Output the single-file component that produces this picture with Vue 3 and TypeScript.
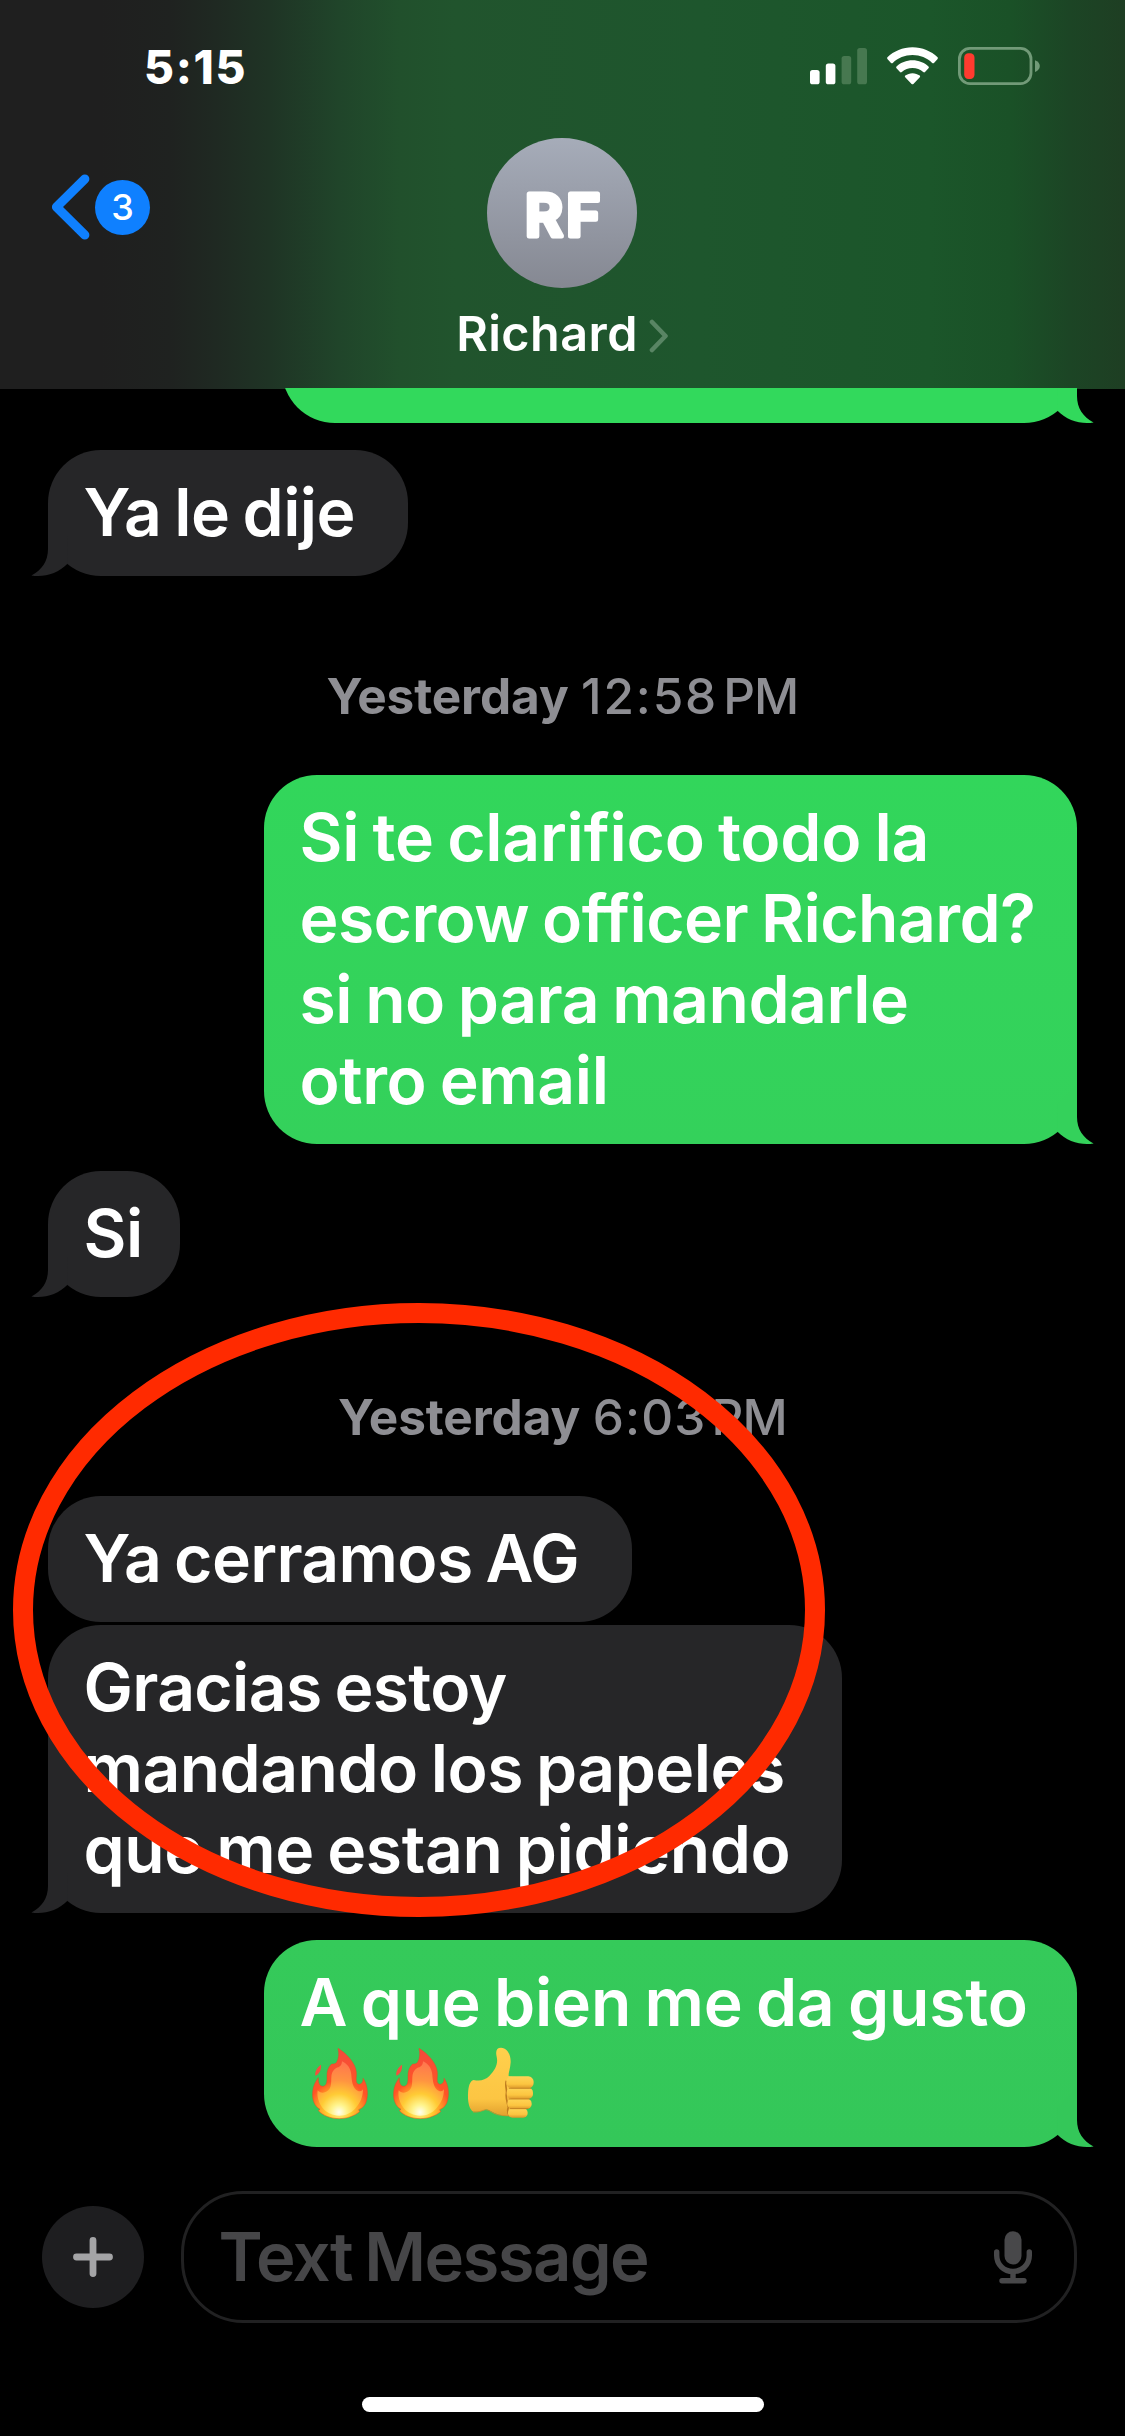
<script setup lang="ts">
interface Line {
  text: string
  tracking: number
}
interface Bubble {
  kind: 'bubble'
  side: 'in' | 'out'
  tone: string
  width: number
  tail: boolean
  tight?: boolean
  lines: Line[]
  reactions?: string[]
}
interface Stamp {
  kind: 'stamp'
  day: string
  time: string
  tracking: number
  meridiem: string
}
type Item = Bubble | Stamp

const items: Item[] = [
  { kind: 'bubble', side: 'out', tone: 'bright', width: 795, tail: true, lines: [{ text: '\u00a0', tracking: 0 }] },
  { kind: 'bubble', side: 'in', tone: 'gray', width: 359.5, tail: true, lines: [{ text: 'Ya le dije', tracking: -0.58 }] },
  { kind: 'stamp', day: 'Yesterday', time: '12:58', tracking: 1.84, meridiem: 'PM' },
  {
    kind: 'bubble', side: 'out', tone: 'mid', width: 813, tail: true,
    lines: [
      { text: 'Si te clarifico todo la', tracking: -0.25 },
      { text: 'escrow officer Richard?', tracking: -0.59 },
      { text: 'si no para mandarle', tracking: -0.5 },
      { text: 'otro email', tracking: -0.38 }
    ]
  },
  { kind: 'bubble', side: 'in', tone: 'gray', width: 131.5, tail: true, lines: [{ text: 'Si', tracking: -0.43 }] },
  { kind: 'stamp', day: 'Yesterday', time: '6:03', tracking: 1.15, meridiem: 'PM' },
  { kind: 'bubble', side: 'in', tone: 'gray', width: 584, tail: false, lines: [{ text: 'Ya cerramos AG', tracking: -0.66 }] },
  {
    kind: 'bubble', side: 'in', tone: 'gray', width: 794, tail: true, tight: true,
    lines: [
      { text: 'Gracias estoy', tracking: -0.69 },
      { text: 'mandando los papeles', tracking: -0.54 },
      { text: 'que me estan pidiendo', tracking: -0.38 }
    ]
  },
  {
    kind: 'bubble', side: 'out', tone: 'deep', width: 813, tail: true,
    lines: [{ text: 'A que bien me da gusto', tracking: -0.22 }],
    reactions: ['fire', 'fire', 'thumb']
  }
]
</script>

<template>
  <div class="screen">
    <header class="header">
      <div class="status">
        <span class="clock">5:15</span>
        <div class="status-icons">
          <svg class="signal" viewBox="0 0 57 38" width="57" height="38">
            <rect x="0" y="23" width="9.6" height="14.3" rx="2.6" fill="#fff" />
            <rect x="15.8" y="16.4" width="9.6" height="20.9" rx="2.6" fill="#fff" />
            <rect x="31.6" y="9" width="9.6" height="28.3" rx="2.6" fill="#477850" />
            <rect x="47.2" y="1" width="9.8" height="36.3" rx="2.6" fill="#477850" />
          </svg>
          <svg class="wifi" viewBox="0 0 51 38" width="51" height="38">
            <path d="M25.5 0.2C35.3 0.2 44.2 4 50.6 10.3C51 10.8 51 11.5 50.6 12L47 15.9C46.5 16.4 45.7 16.4 45.2 15.9C40 11.1 33.1 8.1 25.5 8.1C17.9 8.1 11 11.1 5.8 15.9C5.3 16.4 4.5 16.4 4 15.9L0.4 12C0 11.5 0 10.8 0.4 10.3C6.8 4 15.7 0.2 25.5 0.2Z" fill="#fff" />
            <path d="M25.5 13.3C31.6 13.3 37.3 15.6 41.5 19.5C42 20 42 20.7 41.5 21.2L38 25C37.5 25.5 36.8 25.5 36.2 25C33.3 22.5 29.6 21.1 25.5 21.1C21.4 21.1 17.7 22.5 14.8 25C14.2 25.5 13.5 25.5 13 25L9.5 21.2C9 20.7 9 20 9.5 19.5C13.7 15.6 19.4 13.3 25.5 13.3Z" fill="#fff" />
            <path d="M25.5 26.2C28.2 26.2 30.7 27.1 32.7 28.6C33.2 29 33.3 29.7 32.8 30.2L26.4 36.9C25.9 37.4 25.1 37.4 24.6 36.9L18.2 30.2C17.7 29.7 17.8 29 18.3 28.6C20.3 27.1 22.8 26.2 25.5 26.2Z" fill="#fff" />
          </svg>
          <svg class="battery" viewBox="0 0 82 38" width="82" height="38">
            <rect x="1.4" y="1.4" width="71.6" height="35.2" rx="10.5" fill="none" stroke="#729a78" stroke-width="2.8" />
            <rect x="6.2" y="6.3" width="10.3" height="25.7" rx="4.2" fill="#ff3b2f" />
            <path d="M77 13.2C80 14.2 81.8 16.4 81.8 19.1S80 24 77 25Z" fill="#729a78" />
          </svg>
        </div>
      </div>

      <div class="nav">
        <div class="back">
          <svg viewBox="0 0 40 66" width="40" height="66">
            <path d="M33.8 5L5.5 33L33.8 61" fill="none" stroke="#0f80ff" stroke-width="9.2" stroke-linecap="round" stroke-linejoin="round" />
          </svg>
          <span class="badge">3</span>
        </div>
        <div class="contact">
          <svg class="avatar" viewBox="0 0 150 150" width="150" height="150">
            <defs>
              <linearGradient id="avatar-fill" x1="0" y1="0" x2="0" y2="1">
                <stop offset="0" stop-color="#a6acb9" />
                <stop offset="1" stop-color="#858892" />
              </linearGradient>
            </defs>
            <circle cx="75" cy="75" r="75" fill="url(#avatar-fill)" />
            <text class="initials" x="77.5" y="98" text-anchor="middle">RF</text>
          </svg>
          <div class="name">
            <span>Richard</span>
            <svg viewBox="0 0 20 34" width="20" height="34">
              <path d="M3 3L16.5 17L3 31" fill="none" stroke="#598564" stroke-width="4.6" stroke-linecap="round" stroke-linejoin="round" />
            </svg>
          </div>
        </div>
      </div>
    </header>

    <main class="chat">
      <template v-for="(item, i) in items" :key="i">
        <div v-if="item.kind === 'stamp'" class="stamp">
          <span class="day">{{ item.day }}</span>
          <span class="time" :style="{ letterSpacing: item.tracking + 'px' }">{{ item.time }}</span>
          <span class="meridiem">{{ item.meridiem }}</span>
        </div>
        <div
          v-else
          class="bubble"
          :class="[item.side, item.tone, { tight: item.tight }]"
          :style="{ width: item.width + 'px' }"
        >
          <span v-for="line in item.lines" :key="line.text" class="line" :style="{ letterSpacing: line.tracking + 'px' }">{{ line.text }}</span>
          <div v-if="item.reactions" class="emoji-line">
            <template v-for="(name, n) in item.reactions" :key="n">
              <svg v-if="name === 'fire'" class="fire" viewBox="184 382 174 220" width="58" height="73.3" role="img" aria-label="🔥">
                <defs>
                  <radialGradient id="fire-outer" gradientUnits="userSpaceOnUse" cx="268" cy="572" r="180">
                    <stop offset="0" stop-color="#fff3a0" />
                    <stop offset="0.2" stop-color="#ffd030" />
                    <stop offset="0.38" stop-color="#ff8c24" />
                    <stop offset="0.5" stop-color="#ff5527" />
                    <stop offset="1" stop-color="#f34a3c" />
                  </radialGradient>
                  <radialGradient id="fire-inner" gradientUnits="userSpaceOnUse" cx="268" cy="578" r="155">
                    <stop offset="0" stop-color="#fffff0" />
                    <stop offset="0.15" stop-color="#fff48c" />
                    <stop offset="0.36" stop-color="#ffcb35" />
                    <stop offset="0.62" stop-color="#ff9440" />
                    <stop offset="1" stop-color="#ff7350" />
                  </radialGradient>
                </defs>
                <path d="M214 435C203 443 194 456 197 468C206 465 216 452 214 435Z" fill="#f4503e" />
                <path d="M265 386C292 402 318 432 320 458C321 471 317 484 322 491C329 500 343 489 340 476C353 494 356 520 351 540C348 555 341 564 327 570L330 576C314 589 292 597 269 597C243 597 220 588 206 573L211 569C195 560 187 541 189 517C190 499 198 485 206 474C205 487 209 499 218 500C230 501 233 487 232 472C231 455 236 442 246 433C252 434 258 432 261 428C268 416 269 401 265 386Z" fill="url(#fire-outer)" stroke="#f2401f" stroke-opacity="0.55" stroke-width="2.5" />
                <path d="M277 425C293 432 304 447 305 466C306 483 309 502 320 511C329 518 336 515 340 509C340 531 332 551 316 567C304 580 288 588 269 588C249 588 231 579 219 565C207 550 201 531 204 512C210 519 221 522 232 515C247 505 244 487 245 472C246 455 256 445 266 443C273 440 277 434 277 425Z" fill="url(#fire-inner)" />
              </svg>
              <svg v-else class="thumb" viewBox="655 381 204 220" width="68" height="73.3" role="img" aria-label="👍">
                <defs>
                  <linearGradient id="thumb-palm" x1="0" y1="0" x2="0" y2="1">
                    <stop offset="0" stop-color="#ffd04c" />
                    <stop offset="0.75" stop-color="#fcc543" />
                    <stop offset="1" stop-color="#e2a02e" />
                  </linearGradient>
                  <linearGradient id="thumb-finger" x1="0" y1="0" x2="0" y2="1">
                    <stop offset="0" stop-color="#ffd456" />
                    <stop offset="0.65" stop-color="#fcc540" />
                    <stop offset="1" stop-color="#dc982b" />
                  </linearGradient>
                </defs>
                <path d="M675 480C695 484 710 480 722 468C740 450 749 432 744 410C740 393 744 383 757 383C776 383 787 405 786 427C785 446 779 458 780 468L806 475L808 582L800 588C780 589 760 588 743 581C727 576 721 568 710 569C698 573 686 577 674 575C661 568 657 545 658 522C659 500 663 483 675 480Z" fill="url(#thumb-palm)" />
                <path d="M673 576C687 578 699 573 710 569C724 569 729 580 747 584C764 588 780 588 793 587" fill="none" stroke="#cf8e2a" stroke-width="2.5" />
                <path d="M773 482C768 498 776 509 773 522C771 539 777 549 779 562C775 573 778 582 783 588" fill="none" stroke="#bf7d20" stroke-width="5" />
                <rect x="778" y="565" width="59" height="28" rx="13" fill="url(#thumb-finger)" />
                <rect x="776" y="536" width="73" height="31" rx="14" fill="url(#thumb-finger)" />
                <rect x="774" y="503" width="79" height="34" rx="15" fill="url(#thumb-finger)" />
                <rect x="773" y="469" width="82" height="36" rx="16" fill="url(#thumb-finger)" />
                <path d="M782 505H846M781 537H843M785 566H838" stroke="#bf7d20" stroke-width="2.5" stroke-linecap="round" />
              </svg>
            </template>
          </div>
          <svg v-if="item.tail" class="tail" viewBox="0 0 50 60" width="50" height="60">
            <path d="M32 0V33C32 45 38 54 48.6 59.4C36 61.5 22 57.500 12.5 47.7L12 20Z" fill="currentColor" />
          </svg>
        </div>
      </template>

      <svg class="marker" viewBox="0 0 814 616" width="814" height="616">
        <ellipse cx="407" cy="308" rx="396" ry="297" fill="none" stroke="#ff2a00" stroke-width="20" />
      </svg>
    </main>

    <footer class="composer">
      <button class="plus" aria-label="Add">
        <svg viewBox="0 0 40 40" width="40" height="40">
          <path d="M20 3.5V36.5M3.5 20H36.5" stroke="#a4a4a6" stroke-width="6.8" stroke-linecap="round" />
        </svg>
      </button>
      <div class="field">
        <span class="placeholder">Text Message</span>
        <svg class="mic" viewBox="0 0 38 53" width="38" height="53">
          <rect x="10.5" y="0.3" width="17" height="33.3" rx="8.5" fill="#48484a" />
          <path d="M2.7 21V24.5C2.7 33.8 10 40.4 19 40.4S35.3 33.8 35.3 24.5V21M19 41V49M8 49.8H30" fill="none" stroke="#48484a" stroke-width="5.4" stroke-linecap="round" />
        </svg>
      </div>
    </footer>
    <div class="home"></div>
  </div>
</template>

<style>
html,
body {
  background: #000;
}
</style>

<style scoped>
.screen {
  width: 1125px;
  height: 2436px;
  overflow: hidden;
  background: #000;
  color: #fff;
  font-family: Inter, 'Liberation Sans', sans-serif;
  font-weight: 500;
  display: flex;
  flex-direction: column;
}

/* Header */
.header {
  flex: none;
  height: 389px;
  background: linear-gradient(to right, #1f1f1f 0, #1f1f1f 100px, #1f2220 170px, #1f2922 215px, #1f3425 270px, #20452a 340px, #21502c 400px, #21542d 455px, #1e562d 700px, #1b562a 930px, #1a5127 1010px, #1c4525 1070px, #1e3e23 1125px);
}
.status {
  height: 138px;
  display: flex;
  justify-content: space-between;
  align-items: flex-start;
  padding: 0 85.5px 0 144px;
  box-sizing: border-box;
}
.clock {
  margin-top: 39px;
  font-size: 46px;
  line-height: 56px;
  font-weight: 800;
  letter-spacing: 1.66px;
}
.status-icons {
  margin-top: 47px;
  display: flex;
}
.wifi {
  margin: 0 19.7px 0 19.5px;
}
.nav {
  display: grid;
  grid-template-columns: 1fr auto 1fr;
  align-items: start;
}
.back {
  display: flex;
  align-items: center;
  padding: 35.5px 0 0 51px;
}
.badge {
  width: 55px;
  height: 55px;
  margin: 2px 0 0 4px;
  border-radius: 50%;
  background: #0f80ff;
  font-size: 36px;
  line-height: 55px;
  text-align: center;
}
.contact {
  display: flex;
  flex-direction: column;
  align-items: center;
  gap: 16px;
}
.avatar {
  display: block;
}
.initials {
  font-size: 58px;
  font-weight: 600;
  letter-spacing: 3.5px;
  fill: #fff;
  stroke: #fff;
  stroke-width: 5px;
  stroke-linejoin: round;
}
.name {
  display: flex;
  align-items: center;
  gap: 11px;
  font-size: 48.5px;
  font-weight: 600;
  line-height: 60px;
  letter-spacing: 0.45px;
}
.name svg {
  margin-top: 4px;
}

/* Conversation */
.chat {
  position: relative;
  flex: none;
  height: 1803px;
  margin-top: -1px;
  padding: 0 48px;
  box-sizing: border-box;
  overflow: hidden;
  display: flex;
  flex-direction: column;
  align-items: flex-start;
}
.bubble {
  position: relative;
  flex: none;
  box-sizing: border-box;
  padding: 22px 0 23px 35.5px;
  margin-top: 27px;
  border-radius: 53px;
  display: flex;
  flex-direction: column;
}
.bubble:first-child {
  margin-top: -91px;
}
.stamp + .bubble {
  margin-top: 0;
}
.bubble.tight {
  margin-top: 3px;
}
.bubble.out {
  align-self: flex-end;
}
.gray {
  background: #262628;
  --tone: #262628;
}
.bright {
  background: #32d95c;
  --tone: #32d95c;
}
.mid {
  background: linear-gradient(#32d65b, #34d15b);
  --tone: #34d15b;
}
.deep {
  background: linear-gradient(#35ca5a, #34c759);
  --tone: #34c759;
}
.line {
  font-size: 66px;
  font-weight: 600;
  line-height: 81px;
  height: 81px;
  white-space: nowrap;
  word-spacing: -3px;
}
.emoji-line {
  height: 81px;
  display: flex;
  padding: 4px 0 0 11px;
  box-sizing: border-box;
}
.fire {
  margin-right: 23.3px;
}
.thumb {
  margin-left: -6px;
}
.tail {
  position: absolute;
  bottom: 0;
  color: var(--tone);
}
.out .tail {
  right: -18px;
}
.in .tail {
  left: -18px;
  transform: scaleX(-1);
}
.stamp {
  flex: none;
  align-self: center;
  height: 199px;
  padding-top: 90px;
  box-sizing: border-box;
  display: flex;
  font-size: 49.5px;
  line-height: 60px;
  color: #8e8e93;
}
.day {
  font-weight: 700;
  letter-spacing: -0.09px;
  margin-right: 12.5px;
}
.meridiem {
  letter-spacing: -0.76px;
  margin-left: 5px;
}

/* Hand-drawn highlight over the conversation */
.marker {
  position: absolute;
  left: 12px;
  top: 914px;
}

/* Composer */
.composer {
  flex: none;
  height: 132px;
  display: flex;
  align-items: center;
  gap: 37px;
  padding: 0 48px 0 42px;
}
.plus {
  width: 102px;
  height: 102px;
  padding: 0;
  border: 0;
  border-radius: 50%;
  background: #1e1e20;
  display: flex;
  align-items: center;
  justify-content: center;
}
.field {
  flex: 1;
  height: 132px;
  box-sizing: border-box;
  border: 3px solid #212122;
  border-radius: 62px;
  padding: 0 42px 0 34.5px;
  display: flex;
  align-items: center;
  justify-content: space-between;
}
.placeholder {
  font-size: 67px;
  font-weight: 600;
  line-height: 80px;
  letter-spacing: -1.62px;
  word-spacing: -3px;
  color: #464648;
}
.home {
  flex: none;
  width: 402px;
  height: 15px;
  margin: 74px auto 0;
  border-radius: 8px;
  background: #fff;
}
</style>
